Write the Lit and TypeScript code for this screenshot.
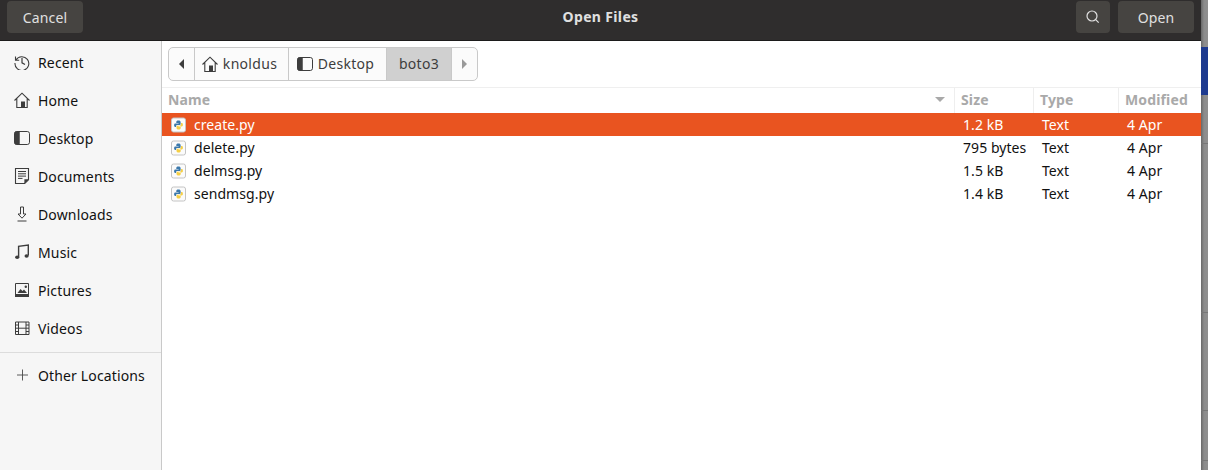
import { LitElement, html, css, svg } from "lit";
import { customElement } from "lit/decorators.js";

const ic = (b: unknown) => html`<svg class="ic" viewBox="0 0 16 16" width="16" height="16">${b}</svg>`;
const icons: Record<string, unknown> = {
  recent: svg`<path d="M1.500 2.500v3.700h3.700M2 6A6.900 6.900 0 1 1 1 9" fill="none" stroke="#3d3d3d" stroke-width="1.100"/><path d="M8 4v4.800l3 1.700" fill="none" stroke="#3d3d3d" stroke-width="1.200"/>`,
  home: svg`<path d="M.5 8.500 8 1.200l7.500 7.300M2.800 6.500V15.500h10.400V6.500" fill="none" stroke="#3d3d3d" stroke-width="1.100"/><rect x="7" y="9.500" width="4" height="6" fill="#3d3d3d"/>`,
  desktop: svg`<rect x=".5" y="1.500" width="15" height="13" rx="2.200" fill="none" stroke="#3d3d3d"/><path d="M2.700 1.500H5.500v13H2.700a2.200 2.200 0 0 1-2.200-2.200V3.700a2.200 2.200 0 0 1 2.200-2.200Z" fill="#3d3d3d" stroke="#3d3d3d" stroke-width=".5"/>`,
  docs: svg`<path d="M1.500.5h13v11.200l-3.800 3.800H1.500Z" fill="none" stroke="#3d3d3d" stroke-width="1.100"/><path d="M4 3.500h8M4 5.800h8M4 8.100h8M4 10.400h4.500" stroke="#3d3d3d"/><path d="M10.400 15.500v-4.200h4.200Z" fill="#3d3d3d"/>`,
  down: svg`<path d="M6.500 1h3v7h2.500L8 12.200 4 8h2.500Z" fill="none" stroke="#3d3d3d"/><path d="M3.500 15h9" stroke="#3d3d3d"/>`,
  music: svg`<path d="M4.600 13V2.300L14.300 1v10.500" fill="none" stroke="#3d3d3d" stroke-width="1.400"/><ellipse cx="3.200" cy="13.200" rx="2.100" ry="1.700" fill="#3d3d3d"/><ellipse cx="12.600" cy="12" rx="2.100" ry="1.700" fill="#3d3d3d"/>`,
  pics: svg`<path d="M1.500 1.500h13v13h-13Z" fill="none" stroke="#3d3d3d"/><path d="M1 12h14v3H1ZM3.500 11l3-4 2 2 1.500-1.500 3 3.500Z" fill="#3d3d3d"/><circle cx="11.800" cy="4.800" r="1.200" fill="#3d3d3d"/>`,
  video: svg`<path d="M1.500 2h13.500v12.500H1.500ZM4.500 2v12.500M12 2v12.500M4.500 8.200H12M1.500 5h3M1.500 8.200h3M1.500 11.500h3M12 5h3M12 8.200h3M12 11.500h3" fill="none" stroke="#3d3d3d"/>`,
  plus: svg`<path d="M8.500 2.500v11M3 8h11" stroke="#4a4a4a" stroke-width=".9"/>`,
};
const places = [
  ["Recent", "recent"], ["Home", "home"], ["Desktop", "desktop"], ["Documents", "docs"],
  ["Downloads", "down"], ["Music", "music"], ["Pictures", "pics"], ["Videos", "video"],
];
const files = [
  ["create.py", "1.2 kB"], ["delete.py", "795 bytes"], ["delmsg.py", "1.5 kB"], ["sendmsg.py", "1.4 kB"],
];
const py = html`<svg class="py" viewBox="0 0 16 16" width="16" height="16">
  <rect x=".5" y="1" width="14" height="14" rx="2" fill="#fbfbfb" stroke="#c4c4c4"/>
  <path d="M7.500 3.500c-1.800 0-2.200.7-2.200 1.500v1.100h2.300v.5H4.400c-.9 0-1.300.7-1.300 1.700s.4 1.700 1.200 1.700h.8V9.100c0-.7.5-1.200 1.200-1.200h2.300c.6 0 1-.5 1-1V5c0-.9-.7-1.500-2.100-1.500Z" fill="#3b78ab"/>
  <path d="M7.500 12.500c1.800 0 2.200-.7 2.200-1.500V9.900H7.500v-.5h3.200c.8 0 1.200-.7 1.200-1.700s-.4-1.700-1.200-1.700H10v1.500c0 .7-.5 1.200-1.200 1.200H6.500c-.6 0-1 .5-1 1V11c0 .9.700 1.500 2 1.500Z" fill="#f5cf45"/>
</svg>`;

@customElement("app-root")
export class AppRoot extends LitElement {
  static styles = css`
    :host { display: block; width: 1208px; height: 470px; overflow: hidden; background: #fff;
      font-family: "Noto Sans", sans-serif; font-size: 14px; letter-spacing: .14px; color: #111; }
    * { box-sizing: border-box; }
    .shell { display: grid; grid-template-columns: 1201px 7px; height: 470px; }
    .strip { display: flex; flex-direction: column; background: linear-gradient(90deg, #686868, #8c8c8c 3px, #8f8f8f); }
    .strip .blue { height: 48px; margin-top: 47px; background: #1d3a8f; }
    .tick { height: 1px; background: #777; }
    .t1 { margin-top: 48px; } .t2 { margin-top: 168px; } .t3 { margin-top: 97px; } .t4 { margin-top: 49px; }
    .dialog { display: flex; flex-direction: column; min-width: 0; }
    .bar { height: 41px; flex: none; background: #2f2d2d; border-bottom: 1px solid #1c1b1b; display: grid; grid-template-columns: 1fr auto 1fr; align-items: start; padding: 1px 7px 0 7px; }
    .btn { height: 32px; border-radius: 4px; background: #464441; display: flex; align-items: center; justify-content: center; color: #e0e0e0; }
    .cancel { width: 76px; }
    .title { font-weight: 700; padding-top: 6px; color: #e0e0e0; letter-spacing: .35px; }
    .right { display: flex; justify-content: flex-end; gap: 8px; }
    .search { width: 34px; }
    .open { width: 76px; }
    .body { flex: 1; display: grid; grid-template-columns: 162px 1fr; min-height: 0; }
    .side { background: #f6f6f6; border-right: 1px solid #c9c9c9; padding-top: 2px; }
    .place { height: 38px; display: flex; align-items: center; gap: 8px; padding-left: 14px; }
    .sep { height: 1px; background: #dcdcdc; margin: 5px 0 3px; }
    .ic { flex: none; }
    .main { display: flex; flex-direction: column; min-width: 0; }
    .pathrow { height: 47px; flex: none; padding: 6px 6px 0; border-bottom: 1px solid #efefef; }
    .path { display: inline-flex; height: 34px; border: 1px solid #c9c9c9; border-radius: 5px; background: #fbfbfb; color: #3d3d3d; overflow: hidden; }
    .seg { display: flex; align-items: center; justify-content: center; gap: 5px; border-right: 1px solid #c9c9c9; letter-spacing: .3px; padding-bottom: 1px; }
    .seg:last-child { border-right: 0; }
    .seg.cur { background: #d0d0d0; }
    .seg.back { width: 26px; }
    .seg.home { width: 94px; padding-right: 4px; }
    .seg.desk { width: 98px; padding-right: 4px; }
    .seg.boto { width: 65px; }
    .seg.fwd { width: 25px; }
    .tri { width: 0; height: 0; border-top: 5px solid transparent; border-bottom: 5px solid transparent; }
    .tri.l { border-right: 5px solid #3d3d3d; }
    .tri.r { border-left: 5px solid #9a9a9a; }
    .cols { display: grid; grid-template-columns: 793px 79px 85px 1fr; }
    .head { height: 25px; flex: none; font-weight: 700; color: #a9a9a9; }
    .head > div { display: flex; align-items: center; padding: 0 0 2px 6px; border-right: 1px solid #eee; }
    .head > div:last-child { border-right: 0; }
    .head .name { justify-content: space-between; padding-right: 9px; }
    .sort { width: 0; height: 0; border-left: 5px solid transparent; border-right: 5px solid transparent; border-top: 5px solid #a9a9a9; }
    .row { height: 23px; align-items: center; letter-spacing: .06px; }
    .row.sel { background: #e95420; color: #fff; }
    .row > div { padding-left: 8px; white-space: nowrap; }
    .row .fname { display: flex; align-items: center; gap: 7px; padding-left: 9px; }
  `;
  render() {
    return html`<div class="shell">
      <div class="dialog">
        <header class="bar">
          <div class="btn cancel">Cancel</div>
          <div class="title">Open Files</div>
          <div class="right">
            <div class="btn search"><svg viewBox="0 0 16 16" width="16" height="16"><circle cx="7" cy="7" r="5" fill="none" stroke="#e0e0e0" stroke-width="1.200"/><path d="m10.700 10.700 3 3" stroke="#e0e0e0" stroke-width="1.200"/></svg></div>
            <div class="btn open">Open</div>
          </div>
        </header>
        <div class="body">
          <nav class="side">
            ${places.map(([t, i]) => html`<div class="place">${ic(icons[i])}<span>${t}</span></div>`)}
            <div class="sep"></div>
            <div class="place">${ic(icons.plus)}<span>Other Locations</span></div>
          </nav>
          <main class="main">
            <div class="pathrow">
              <div class="path">
                <div class="seg back"><span class="tri l"></span></div>
                <div class="seg home">${ic(icons.home)}<span>knoldus</span></div>
                <div class="seg desk">${ic(icons.desktop)}<span>Desktop</span></div>
                <div class="seg boto cur"><span>boto3</span></div>
                <div class="seg fwd"><span class="tri r"></span></div>
              </div>
            </div>
            <div class="cols head">
              <div class="name">Name<span class="sort"></span></div>
              <div>Size</div><div>Type</div><div>Modified</div>
            </div>
            ${files.map(([n, s], i) => html`<div class="cols row ${i === 0 ? "sel" : ""}">
              <div class="fname">${py}<span>${n}</span></div>
              <div>${s}</div><div>Text</div><div>4 Apr</div>
            </div>`)}
          </main>
        </div>
      </div>
      <div class="strip"><div class="blue"></div><div class="tick t1"></div><div class="tick t2"></div><div class="tick t3"></div><div class="tick t4"></div></div>
    </div>`;
  }
}
